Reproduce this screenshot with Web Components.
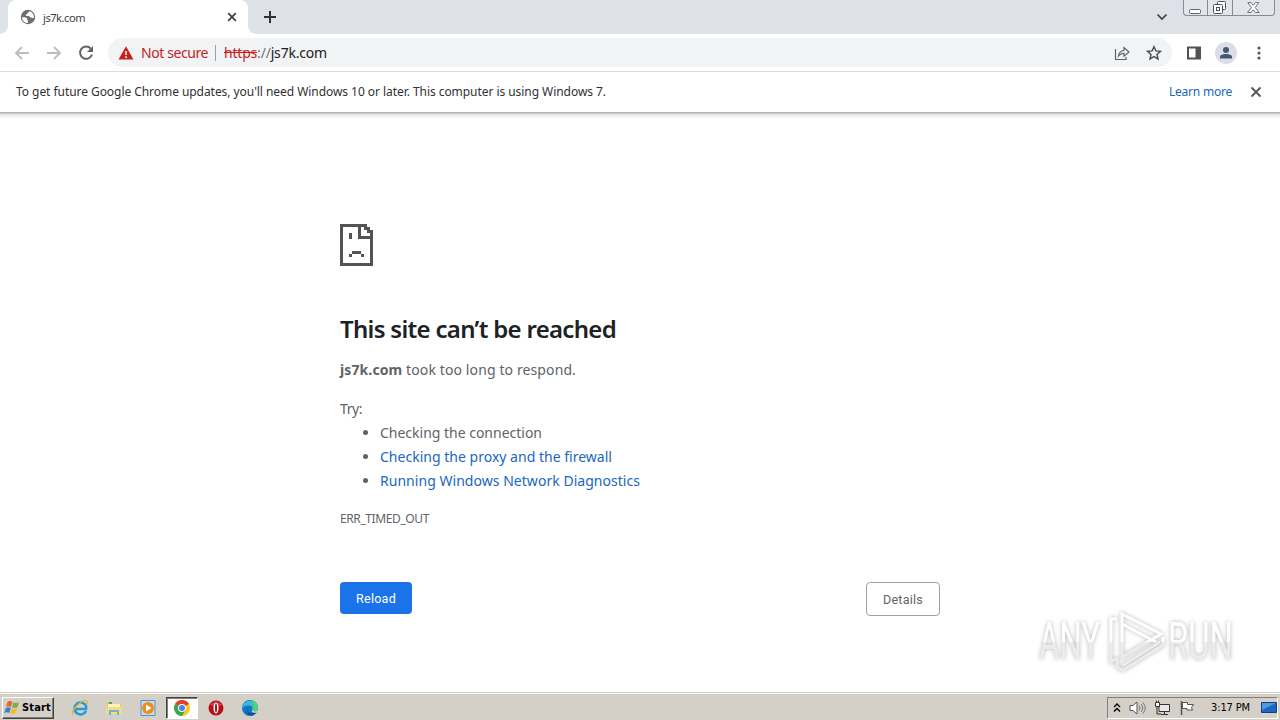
<!DOCTYPE html>
<html lang="en">
<head>
<meta charset="utf-8">
<title>js7k.com</title>
<style>
  body {
    margin: 0;
    width: 1280px;
    height: 720px;
    overflow: hidden;
    display: flex;
    flex-direction: column;
    background: #fff;
    font-family: "Noto Sans", "Open Sans", sans-serif;
  }
</style>
</head>
<body>
<tab-strip><fit-text width="42">js7k.com</fit-text></tab-strip>
<browser-toolbar></browser-toolbar>
<info-bar>
  <fit-text width="590">To get future Google Chrome updates, you'll need Windows 10 or later. This computer is using Windows 7.</fit-text>
  <fit-text slot="link" width="63">Learn more</fit-text>
</info-bar>
<error-page></error-page>
<task-bar></task-bar>

<script>
// Creates the shadow root of an element from its markup
class BaseElement extends HTMLElement {
  constructor() {
    super()
    const template = document.createElement('template')
    template.innerHTML = this.constructor.markup
    this._shadowRoot = this.attachShadow({ mode: 'open' })
    this._shadowRoot.appendChild(template.content.cloneNode(true))
  }
}

class TabStrip extends BaseElement {
  static markup = `
<style>
  :host { display: flex; height: 34px; flex: none; background: #dee1e8; box-sizing: border-box; padding-left: 8px; }
  .tab {
    position: relative;
    display: flex;
    align-items: center;
    width: 240px;
    box-sizing: border-box;
    padding: 0 10px 0 12px;
    background: #fff;
    border-radius: 8px 8px 0 0;
    font-size: 11px;
    color: #3c4043;
  }
  .tab::before, .tab::after { content: ""; position: absolute; bottom: 0; width: 8px; height: 8px; }
  .tab::before { left: -8px; background: radial-gradient(circle at 0 0, transparent 7.5px, #fff 8px); }
  .tab::after { right: -8px; background: radial-gradient(circle at 100% 0, transparent 7.5px, #fff 8px); }
  .globe { margin-right: 7px; }
  .close { margin-left: auto; }
  .plus { margin: 10px 0 0 15px; }
  .chevron { margin: 13px 15px 0 auto; }
  .window {
    display: grid;
    grid-template-columns: 24px 25px 41px;
    width: 90px;
    height: 15px;
    margin-right: 5px;
    border: 1px solid #888b94;
    border-top: 0;
    border-radius: 0 0 4px 4px;
    background: #e3e5eb;
  }
  .window svg { display: block; margin: auto; }
  .window span { display: flex; border-right: 1px solid #888b94; }
  .window span:last-child { border: 0; }
</style>
<div class="tab">
  <svg class="globe" width="16" height="16" viewBox="0 0 16 16"><circle cx="8" cy="8" r="7.2" fill="#6c7075"/><path d="M2 8.2c2.2-.1 4 .1 4.8 1 .8.8-.2 1.5.8 2.1.7.5.3 1.7.2 2.6C4.600 14 2 11.500 2 8.200zM9.200 2.200c-.2 1.300-1.700 1.200-1.900 2.300-.2 1.200-1.700.6-1.600 1.800.2 1 1.600.5 2.800.7 1.500.2 1.200 1.600 2.600 1.600 1 0 1.500.8 2.800.5C14.200 5.700 12.300 2.800 9.200 2.200z" fill="#fff"/></svg>
  <slot></slot>
  <svg class="close" width="12" height="12" viewBox="0 0 12 12"><path d="M2.200 2.200l7.600 7.600M9.800 2.200l-7.600 7.600" stroke="#3c4043" stroke-width="1.700"/></svg>
</div>
<svg class="plus" width="14" height="14" viewBox="0 0 14 14"><path d="M7 1v12M1 7h12" stroke="#303238" stroke-width="2"/></svg>
<svg class="chevron" width="12" height="8" viewBox="0 0 12 8"><path d="M1.500 1.500L6 6l4.500-4.500" fill="none" stroke="#3c4043" stroke-width="1.700"/></svg>
<div class="window">
  <span><svg width="13" height="14" viewBox="0 0 13 14"><rect x=".5" y="8.500" width="11" height="4" rx="1" fill="#fff" stroke="#60646d"/></svg></span>
  <span><svg width="14" height="14" viewBox="0 0 14 14"><g fill="#fff" stroke="#4e525c"><rect x="4.500" y=".5" width="8" height="8" rx="1"/><rect x=".5" y="3.500" width="9" height="9" rx="1"/><rect x="3.500" y="6.500" width="3" height="3"/></g></svg></span>
  <span><svg width="13" height="12" viewBox="0 0 13 12"><path d="M.8.6h3.400l2.100 2.700L8.400.6h3.400L8.200 5.500l3.900 5H8.500L6.300 7.800l-2.200 2.700H.5l3.900-5z" fill="#fff" stroke="#60646d" stroke-width=".9"/></svg></span>
</div>`
}

class BrowserToolbar extends BaseElement {
  static markup = `
<style>
  :host { display: flex; align-items: center; flex: none; height: 38px; box-sizing: border-box; border-bottom: 1px solid #dadce0; padding: 0 13px 0 14px; font-size: 14px; }
  svg { display: block; flex: none; }
  .nav { display: flex; gap: 16px; }
  .omnibox { display: flex; align-items: center; width: 1064px; height: 29px; box-sizing: border-box; margin-left: 14px; padding: 0 10px; border-radius: 15px; background: #f1f3f4; color: #202124; }
  .danger { color: #c5221f; }
  .warn { margin-right: 7px; }
  .rule { width: 1px; height: 16px; margin: 0 8px 0 7px; background: #9aa0a6; }
  s { color: #c5221f; }
  i { font-style: normal; color: #70757a; }
  .share { margin-left: auto; }
  .star { margin-left: 16px; }
  .side { margin-left: 14px; }
  .user { margin-left: 13px; }
  .menu { margin-left: auto; }
</style>
<div class="nav">
  <svg width="16" height="16" viewBox="0 0 16 16"><path d="M15 8H2M8 2L2 8l6 6" fill="none" stroke="#babcbe" stroke-width="1.800"/></svg>
  <svg width="16" height="16" viewBox="0 0 16 16"><path d="M1 8h13M8 2l6 6-6 6" fill="none" stroke="#babcbe" stroke-width="1.800"/></svg>
  <svg width="16" height="16" viewBox="0 0 16 16"><path d="M12.700 3.600A6.100 6.100 0 1 0 14 9.500" fill="none" stroke="#5f6368" stroke-width="2"/><path d="M15 1v6H9z" fill="#5f6368"/></svg>
</div>
<div class="omnibox">
  <svg class="warn" width="16" height="14" viewBox="0 0 16 14"><path d="M8 .3L15.500 13.500H.5z" fill="#c5221f"/><path d="M8 5v4M8 10.300v1.700" stroke="#fff" stroke-width="1.500"/></svg>
  <fit-text class="danger" width="67">Not secure</fit-text>
  <span class="rule"></span>
  <fit-text width="103"><s>https</s><i>://</i>js7k.com</fit-text>
  <svg class="share" width="16" height="16" viewBox="0 0 16 16"><path d="M1.500 4v10.500H12V12M4.500 11C5 7.300 7 5.700 10 5.500V2.500L15 7l-5 4.300V8.300C7.500 8.300 6 9 4.500 11z" fill="none" stroke="#5f6368" stroke-width="1.200"/></svg>
  <svg class="star" width="16" height="16" viewBox="0 0 16 16"><path d="M8 1.700l1.900 4.200 4.500.5-3.400 3 1 4.500L8 11.600l-4 2.300 1-4.500-3.400-3 4.500-.5z" fill="none" stroke="#50545a" stroke-width="1.500"/></svg>
</div>
<svg class="side" width="16" height="16" viewBox="0 0 16 16"><path d="M1 1.500h14v13H1zM3 3.500v9h6.500v-9z" fill="#505356" fill-rule="evenodd"/></svg>
<svg class="user" width="22" height="22" viewBox="0 0 22 22"><circle cx="11" cy="11" r="11" fill="#dadfe6"/><circle cx="11" cy="8" r="3" fill="#475672"/><path d="M5 16.500v-1.800C5 12.800 8.800 12 11 12s6 .8 6 2.700v1.800z" fill="#475672"/></svg>
<svg class="menu" width="16" height="16" viewBox="0 0 16 16"><g fill="#54585c"><circle cx="8" cy="3" r="1.600"/><circle cx="8" cy="8" r="1.600"/><circle cx="8" cy="13" r="1.600"/></g></svg>`
}

class InfoBar extends BaseElement {
  static markup = `
<style>
  :host {
    display: flex;
    align-items: center;
    flex: none;
    height: 40px;
    box-sizing: border-box;
    padding: 0 18px 2px 16px;
    font-size: 12px;
    color: #303134;
    box-shadow: 0 1px 0 #b5b5b5, 0 2px 0 #c9c9c9, 0 4px 0 #e8e8e8, 0 6px 0 #f7f7f7;
    position: relative;
  }
  .link { margin-left: auto; color: #1967b8; text-decoration: underline; text-underline-offset: 1px; }
  svg { margin: 2px 0 0 18px; }
</style>
<slot></slot>
<span class="link"><slot name="link"></slot></span>
<svg width="12" height="12" viewBox="0 0 12 12"><path d="M1.500 1.500l9 9M10.500 1.500l-9 9" stroke="#54585c" stroke-width="1.900"/></svg>`
}

class PageButton extends BaseElement {
  static markup = `
<style>
  :host { display: block; }
  button {
    display: flex;
    align-items: center;
    justify-content: center;
    width: 72px;
    height: 32px;
    padding: 0;
    border: 0;
    border-radius: 4px;
    background: #1a73e8;
    color: #fff;
    font: 12.500px "Roboto", sans-serif;
  }
  :host([secondary]) button { width: 74px; height: 34px; border: 1px solid #9aa0a6; background: #fff; color: #5f6368; }
</style>
<button><slot></slot></button>`
}

class ErrorPage extends BaseElement {
  static markup = `
<style>
  :host { display: block; flex: 1; min-height: 0; position: relative; color: #5f6368; font-size: 14px; }
  main { width: 600px; margin: 0 auto; padding-top: 112px; }
  .sad { display: block; width: 33px; height: 42px; }
  h1 { margin: 46px 0 0; font-size: 24px; font-weight: 600; line-height: 33px; color: #202124; }
  p { margin: 0; line-height: 24px; }
  .summary { margin-top: 13px; }
  .try { margin-top: 15px; }
  ul { margin: 0; padding-left: 40px; line-height: 24px; }
  a { color: #1967c0; }
  .code { margin-top: 14px; font-size: 12px; }
  .buttons { display: flex; justify-content: space-between; margin-top: 51px; }
  .mark { position: absolute; right: 36px; bottom: 16px; filter: drop-shadow(0 0 2px #b4b4b4); }
</style>
<main>
  <svg class="sad" viewBox="0 0 11 14" shape-rendering="crispEdges"><path d="M0 0h9v1h1v1h1v12H0zM1 1v12h9V5H6V1zM7 1v3h3V3H9V2H8V1zM3 3h1v2H3zM4 9h3v1H4zM3 10h1v1H3zM7 10h1v1H7z" fill="#535353" fill-rule="evenodd"/></svg>
  <h1><fit-text width="276">This site can’t be reached</fit-text></h1>
  <p class="summary"><fit-text width="236"><b>js7k.com</b> took too long to respond.</fit-text></p>
  <p class="try"><fit-text width="22">Try:</fit-text></p>
  <ul>
    <li><fit-text width="162">Checking the connection</fit-text></li>
    <li><a><fit-text width="232">Checking the proxy and the firewall</fit-text></a></li>
    <li><a><fit-text width="260">Running Windows Network Diagnostics</fit-text></a></li>
  </ul>
  <p class="code"><fit-text width="89">ERR_TIMED_OUT</fit-text></p>
  <div class="buttons">
    <page-button><fit-text width="40">Reload</fit-text></page-button>
    <page-button secondary><fit-text width="40">Details</fit-text></page-button>
  </div>
</main>
<svg class="mark" width="208" height="68" viewBox="0 0 208 68">
  <defs><linearGradient id="fade" x1="0" y1="0" x2="0" y2="68" gradientUnits="userSpaceOnUse"><stop offset=".5" stop-color="#fff"/><stop offset=".5" stop-color="#ececec"/></linearGradient></defs>
  <g fill="url(#fade)" font-family="Roboto, sans-serif" font-size="51" font-weight="400">
    <text x="3" y="51" textLength="61" lengthAdjust="spacingAndGlyphs">ANY</text>
    <text x="132" y="51" textLength="65" lengthAdjust="spacingAndGlyphs">RUN</text>
  </g>
  <path d="M86 6v43l39-23zM81 11h-6v43l6-4M86 16l34 18M81 50v9l6 3 40-25v-8M86 58l38-24" fill="none" stroke="url(#fade)" stroke-width="3"/>
</svg>`
}

class TaskBar extends BaseElement {
  static markup = `
<style>
  :host {
    display: flex;
    align-items: center;
    flex: none;
    height: 28px;
    box-sizing: border-box;
    padding: 3px 2px 1px;
    background: #d4d0c8;
    border-top: 1px solid #d4d0c8;
    box-shadow: inset 0 1px 0 #fff;
    font: 11px "DejaVu Sans Condensed", "DejaVu Sans", sans-serif;
    color: #000;
  }
  svg { display: block; flex: none; }
  .start {
    display: flex;
    align-items: center;
    gap: 1px;
    width: 52px;
    height: 22px;
    box-sizing: border-box;
    padding-left: 1px;
    border: 1px solid;
    border-color: #fff #404040 #404040 #fff;
    box-shadow: inset -1px -1px 0 #808080;
    font-weight: bold;
  }
  .apps { display: flex; align-items: center; margin-left: 9px; }
  .apps span { display: flex; align-items: center; justify-content: center; width: 34px; height: 22px; box-sizing: border-box; }
  .apps .active { width: 32px; margin: 0 1px; background: #fff; border: 1px solid; border-color: #404040 #fff #fff #404040; box-shadow: inset 1px 1px 0 #808080; }
  .tray { display: flex; align-items: center; width: 171px; height: 22px; box-sizing: border-box; margin-left: auto; padding-left: 5px; border: 1px solid; border-color: #808080 #fff #fff #808080; }
  .tray svg + svg { margin-left: 8px; }
  .tray fit-text { margin-left: 15px; }
  .tray .desktop { margin-left: 11px; }
</style>
<div class="start">
  <svg width="17" height="17" viewBox="0 0 17 17"><path d="M3.500 3C5 1.700 6.700 1.900 8.500 3L7 8C5.400 7 3.800 7 2 8z" fill="#e8642c"/><path d="M9.300 3.200c1.800 1 3.500 1 5.700-.2L13.500 8c-1.800 1.200-3.500 1.200-5.400.2z" fill="#72b545"/><path d="M1.800 9c1.800-1.100 3.400-1 5-.1l-1.500 5C3.800 13 2 13 .3 14z" fill="#2d87cc"/><path d="M7.700 9.200c1.900 1 3.500 1 5.500-.2l-1.500 5c-2 1.200-3.600 1.100-5.400.1z" fill="#f5b92b"/></svg>
  <fit-text width="29">Start</fit-text>
</div>
<div class="apps">
  <span><svg width="18" height="18" viewBox="0 0 18 18"><path d="M15 12a6 6 0 1 1 .2-4.500L15 10H5" fill="none" stroke="#269bd8" stroke-width="2.600"/><path d="M2 16C-2 13 12-1 16 2c1 .8.500 2.200-.3 3.400" fill="none" stroke="#e5b52f" stroke-width="1.300"/></svg></span>
  <span><svg width="18" height="18" viewBox="0 0 18 18"><path d="M2 3h5l1 2h8v10H2z" fill="#e6c465"/><path d="M3 5h12v5H3z" fill="#fff4bb"/><path d="M1 8h16v7H1z" fill="#f5dc83"/><path d="M4 16v-5h10v5h-2v-3H6v3z" fill="#69b6dd"/><path d="M4 3h3v2H4z" fill="#51a34c"/></svg></span>
  <span><svg width="18" height="18" viewBox="0 0 18 18"><path d="M2 1.500h14v15H2z" fill="#c2dcf0" stroke="#5a91be"/><circle cx="9" cy="9" r="6" fill="#f08b1d"/><path d="M7 5.500v7L12.500 9z" fill="#fff"/></svg></span>
  <span class="active"><svg width="16" height="16" viewBox="0 0 16 16"><circle cx="8" cy="8" r="8" fill="#fbc917"/><path d="M8 8L1.100 4A8 8 0 0 1 14.900 4z" fill="#e43e2b"/><path d="M8 8L1.100 4A8 8 0 0 0 8 16l3.500-6z" fill="#36a852"/><circle cx="8" cy="8" r="4" fill="#fff"/><circle cx="8" cy="8" r="3" fill="#4285f4"/></svg></span>
  <span><svg width="16" height="16" viewBox="0 0 16 16"><circle cx="8" cy="8" r="7.500" fill="#b80f16"/><path d="M2 5a7 6 0 0 1 12 0L8 7z" fill="#e2636a" opacity=".6"/><ellipse cx="8" cy="8" rx="2.500" ry="5.500" fill="#fff"/><ellipse cx="8" cy="8" rx="1" ry="4.500" fill="#a00d13"/></svg></span>
  <span><svg width="16" height="16" viewBox="0 0 16 16"><circle cx="8" cy="8" r="8" fill="#1474c4"/><path d="M.5 6A8 8 0 0 1 16 8c0 3-4 4-6 2.500 1.500-2 .5-4.500-2.500-5C4 5 1 6.500.100 9z" fill="#33bcd8"/><path d="M9 .1A8 8 0 0 1 16 8c0 3-4 4-6 2.500C11.500 8 13 4 9 .1z" fill="#55d369"/><path d="M6 8c-2 3 1 6.500 8 4.500-1.200 1.800-3.200 3-5 3.300C5.500 15 3.500 10.500 6 8z" fill="#114c9b"/><path d="M10 10.500c2 1.500 5 .8 6-1.500-.2 1.500-.8 2.600-1.600 3.500-3 .8-5.500-.2-4.400-2z" fill="#d4d0c8"/></svg></span>
</div>
<div class="tray">
  <svg width="8" height="12" viewBox="0 0 8 12"><path d="M1 5l3-3 3 3M1 9.500l3-3 3 3" fill="none" stroke="#000" stroke-width="1.400"/></svg>
  <svg width="17" height="16" viewBox="0 0 17 16"><path d="M1 5.500h3L8 2v12l-4-3.500H1z" fill="#fff" stroke="#555"/><path d="M10 5.500q2 2.500 0 5M12 4q3.500 4 0 8M14 2.500q4.500 5.500 0 11" fill="none" stroke="#777"/></svg>
  <svg width="17" height="16" viewBox="0 0 17 16"><path d="M5 4.500h10.500v7H5z" fill="#e8e8e8" stroke="#333"/><path d="M7 14.500h7M10.500 12v2.500M3 7v7h4" fill="none" stroke="#333"/><path d="M1.500 2.500h4v4h-4zM2.500.5v2M4.500.5v2" fill="#fff" stroke="#333"/></svg>
  <svg width="17" height="16" viewBox="0 0 17 16"><path d="M2.500 1v14" stroke="#555" stroke-width="1.500"/><path d="M3.500 2.500h5v2h6l-2 3 1 2.500H8V8.500H3.500z" fill="#fff" stroke="#555"/></svg>
  <fit-text width="39">3:17 PM</fit-text>
  <svg class="desktop" width="16" height="14" viewBox="0 0 16 14"><path d="M.5 1.500h15v10H.5z" fill="#1c65c1" stroke="#123d79"/><path d="M1 2h14L1 9z" fill="#4e9ae2"/><path d="M1 12.500h5" stroke="#c9e1f5"/></svg>
</div>`
}

// Text run that is tracked in or out to a given width
class FitText extends BaseElement {
  static markup = `
<style>
  :host { display: inline-block; white-space: nowrap; text-decoration: inherit; }
</style>
<slot></slot>`

  connectedCallback() {
    const width = Number(this.getAttribute('width'))
    const natural = this.getBoundingClientRect().width
    this.style.letterSpacing = (width - natural) / this.textContent.length + 'px'
  }
}

customElements.define('tab-strip', TabStrip)
customElements.define('browser-toolbar', BrowserToolbar)
customElements.define('info-bar', InfoBar)
customElements.define('page-button', PageButton)
customElements.define('error-page', ErrorPage)
customElements.define('task-bar', TaskBar)
customElements.define('fit-text', FitText)
</script>
</body>
</html>
